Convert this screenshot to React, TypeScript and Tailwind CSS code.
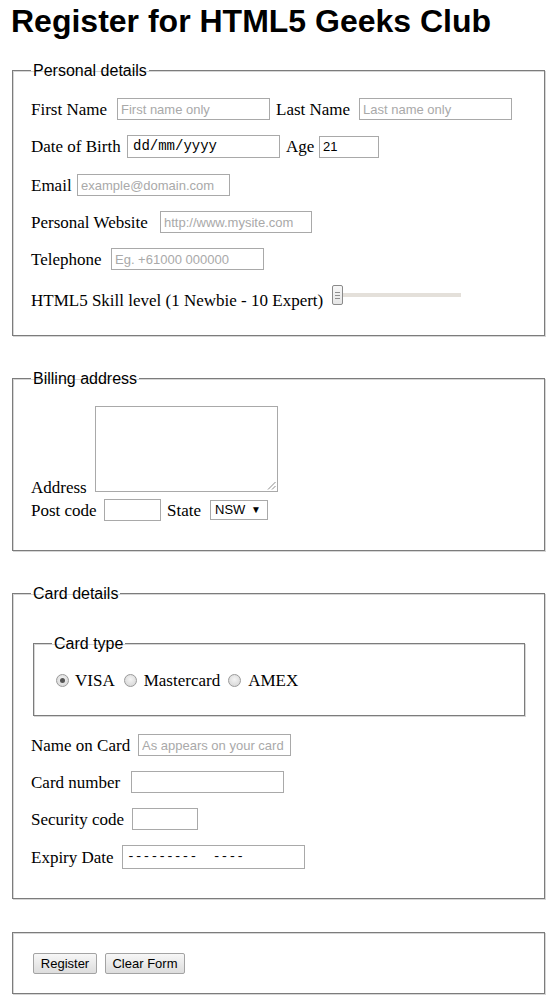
import React from "react";

const serif = "font-['Liberation_Serif','Times_New_Roman',serif] text-[17px] leading-[19px] text-black whitespace-nowrap shrink-0";
const sans = "font-['Liberation_Sans',Arial,sans-serif]";
const boxBase = "shrink-0 border border-[#a9a9a9] bg-white px-[3px] text-black outline-none";
const inputCls = `${boxBase} text-[13px] font-['Liberation_Sans',Arial,sans-serif] placeholder:text-[#a9a9a9]`;
const monoCls = `${boxBase} font-['Liberation_Mono','Courier_New',monospace] whitespace-pre flex items-center`;
const fieldsetCls =
  "border border-[#7c7c7c] shadow-[inset_1px_1px_0_#d6d6d6,1px_1px_0_#d6d6d6] pl-[18px] pr-[17px]";
const legendCls =
  "px-[2px] text-[16px] leading-[17px] text-black font-['Liberation_Sans',Arial,sans-serif]";

function Label({ w, children }: { w: string; children: React.ReactNode }) {
  return <span className={`${serif} ${w}`}>{children}</span>;
}

function Radio({ checked }: { checked?: boolean }) {
  return (
    <span className="shrink-0 w-[13px] h-[13px] rounded-full border border-[#9a9a9a] bg-[radial-gradient(circle_at_50%_40%,#f4f4f4,#d2d2d2)] flex items-center justify-center">
      {checked && <span className="w-[5px] h-[5px] rounded-full bg-[#555]" />}
    </span>
  );
}

function Slider() {
  return (
    <div className="shrink-0 flex items-center h-[20px] mb-[5px]">
      <div className="w-[11px] h-[20px] rounded-[2px] border border-[#8a8a8a] bg-gradient-to-b from-[#f7f7f7] to-[#e6e6e6] flex flex-col items-center justify-center gap-[2px]">
        <span className="block w-[5px] h-px bg-[#8e8e8e]" />
        <span className="block w-[5px] h-px bg-[#8e8e8e]" />
        <span className="block w-[5px] h-px bg-[#8e8e8e]" />
      </div>
      <div className="w-[118px] h-[4px] bg-[#e4e0da]" />
    </div>
  );
}

function Button({ w, children }: { w: string; children: React.ReactNode }) {
  return (
    <button
      type="button"
      className={`${w} h-[21px] shrink-0 rounded-[2px] border border-[#a3a3a3] bg-gradient-to-b from-[#f7f7f7] to-[#dddddd] text-[13px] text-black ${sans} leading-[19px]`}
    >
      {children}
    </button>
  );
}

export default function App() {
  return (
    <div className="min-h-[1002px] w-[554px] bg-white pl-[12px] pr-[9px] pt-[3px] pb-[8px]">
      <h1 className={`-ml-[1px] text-[32px] font-bold leading-[37px] text-black ${sans}`}>
        Register for HTML5 Geeks Club
      </h1>

      {/* Personal details */}
      <fieldset className={`${fieldsetCls} mt-[22px] pb-[25px]`}>
        <legend className={legendCls}>Personal details</legend>
        <div className="mt-[19px] flex h-[22px] items-center gap-[6px]">
          <Label w="w-[80px]">First Name</Label>
          <input readOnly placeholder="First name only" className={`${inputCls} w-[153px] h-[22px]`} />
          <Label w="w-[77px]">Last Name</Label>
          <input readOnly placeholder="Last name only" className={`${inputCls} w-[153px] h-[22px]`} />
        </div>
        <div className="mt-[15px] flex h-[23px] items-center gap-[6px]">
          <Label w="w-[90px]">Date of Birth</Label>
          <div className={`${monoCls} w-[153px] h-[23px] pl-[5px] text-[14px] text-[#222]`}>dd/mm/yyyy</div>
          <Label w="w-[27px]">Age</Label>
          <input readOnly value="21" className={`${inputCls} w-[60px] h-[22px]`} />
        </div>
        <div className="mt-[16px] flex h-[22px] items-center gap-[6px]">
          <Label w="w-[40px]">Email</Label>
          <input readOnly placeholder="example@domain.com" className={`${inputCls} w-[153px] h-[22px]`} />
        </div>
        <div className="mt-[15px] flex h-[22px] items-center gap-[6px]">
          <Label w="w-[123px]">Personal Website</Label>
          <input readOnly placeholder="http://www.mysite.com" className={`${inputCls} w-[152px] h-[22px]`} />
        </div>
        <div className="mt-[15px] flex h-[22px] items-center gap-[6px]">
          <Label w="w-[74px]">Telephone</Label>
          <input readOnly placeholder="Eg. +61000 000000" className={`${inputCls} w-[153px] h-[22px]`} />
        </div>
        <div className="mt-[15px] flex items-end gap-[6px]">
          <Label w="w-[295px]">HTML5 Skill level (1 Newbie - 10 Expert)</Label>
          <Slider />
        </div>
      </fieldset>

      {/* Billing address */}
      <fieldset className={`${fieldsetCls} mt-[34px] pb-[29px]`}>
        <legend className={legendCls}>Billing address</legend>
        <div className="mt-[19px] flex items-end gap-[6px]">
          <Label w="w-[58px]">Address</Label>
          <div className="relative mb-[5px] h-[86px] w-[183px] shrink-0 border border-[#a9a9a9] bg-white">
            <svg className="absolute bottom-[1px] right-[1px]" width="9" height="9" viewBox="0 0 9 9">
              <line x1="8.5" y1="1" x2="1" y2="8.5" stroke="#8a8a8a" strokeWidth="1" />
              <line x1="8.5" y1="5" x2="5" y2="8.5" stroke="#8a8a8a" strokeWidth="1" />
            </svg>
          </div>
        </div>
        <div className="mt-[2px] flex h-[22px] items-center gap-[6px]">
          <Label w="w-[67px]">Post code</Label>
          <input readOnly className={`${inputCls} w-[57px] h-[22px]`} />
          <Label w="w-[37px]">State</Label>
          <div className={`shrink-0 flex h-[20px] w-[58px] items-center justify-between border border-[#a9a9a9] bg-white pl-[4px] pr-[6px] text-[13px] text-black ${sans}`}>
            <span>NSW</span>
            <span className="text-[10px] leading-none">▼</span>
          </div>
        </div>
      </fieldset>

      {/* Card details */}
      <fieldset className={`${fieldsetCls} mt-[34px] pb-[29px]`}>
        <legend className={legendCls}>Card details</legend>
        <fieldset className={`${fieldsetCls} mx-[2px] mt-[33px] pb-[24px]`}>
          <legend className={legendCls}>Card type</legend>
          <div className="mt-[17px] flex h-[22px] items-center">
            <span className="ml-[4px]"><Radio checked /></span>
            <span className={`${serif} ml-[6px]`}>VISA</span>
            <span className="ml-[9px]"><Radio /></span>
            <span className={`${serif} ml-[7px]`}>Mastercard</span>
            <span className="ml-[8px]"><Radio /></span>
            <span className={`${serif} ml-[7px]`}>AMEX</span>
          </div>
        </fieldset>
        <div className="mt-[18px] flex h-[22px] items-center gap-[6px]">
          <Label w="w-[101px]">Name on Card</Label>
          <input readOnly placeholder="As appears on your card" className={`${inputCls} w-[153px] h-[22px]`} />
        </div>
        <div className="mt-[15px] flex h-[22px] items-center gap-[6px]">
          <Label w="w-[94px]">Card number</Label>
          <input readOnly className={`${inputCls} w-[153px] h-[22px]`} />
        </div>
        <div className="mt-[15px] flex h-[22px] items-center gap-[6px]">
          <Label w="w-[95px]">Security code</Label>
          <input readOnly className={`${inputCls} w-[66px] h-[22px]`} />
        </div>
        <div className="mt-[15px] flex h-[24px] items-center gap-[6px]">
          <Label w="w-[85px]">Expiry Date</Label>
          <div className={`${monoCls} w-[183px] h-[24px] pl-[4px] text-[13px]`}>{"---------  ----"}</div>
        </div>
      </fieldset>

      {/* Buttons */}
      <fieldset className={`${fieldsetCls} mt-[33px] pt-[20px] pb-[19px]`}>
        <div className="ml-[2px] flex gap-[8px]">
          <Button w="w-[64px]">Register</Button>
          <Button w="w-[80px]">Clear Form</Button>
        </div>
      </fieldset>
    </div>
  );
}
